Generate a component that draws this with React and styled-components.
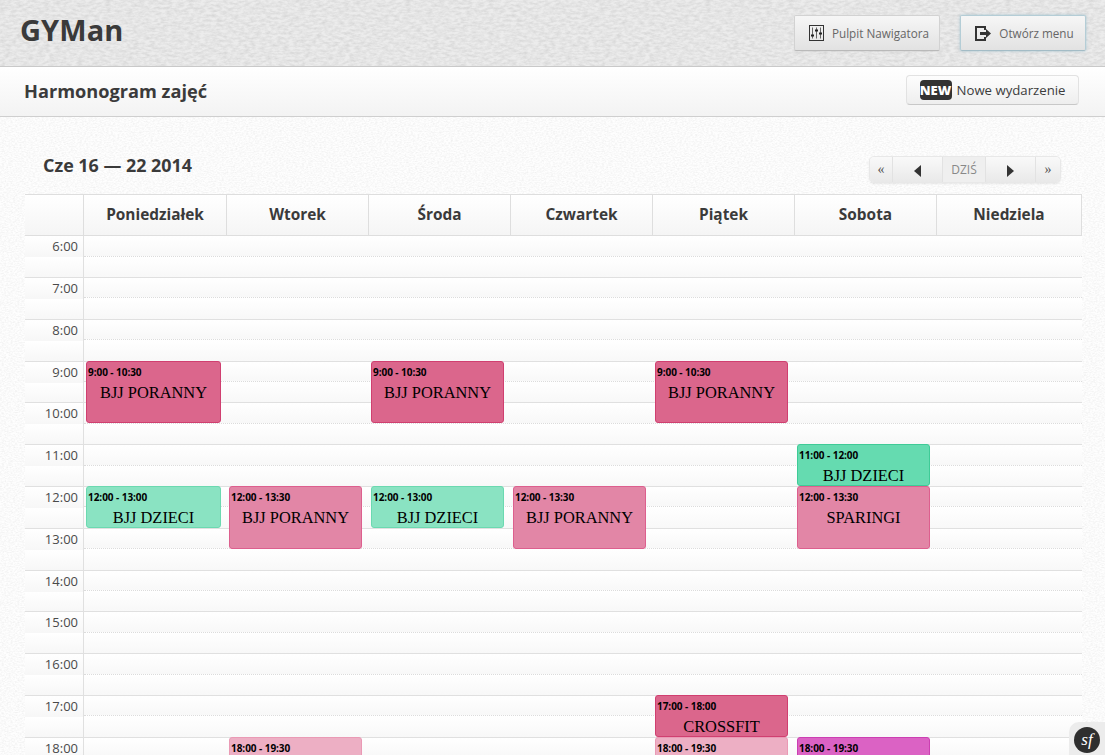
import React from "react";
import styled, { createGlobalStyle } from "styled-components";

const noise = (freq, slope, intercept, base) =>
  `url("data:image/svg+xml,%3Csvg xmlns='http://www.w3.org/2000/svg' width='300' height='300'%3E%3Cfilter id='n' x='0' y='0' width='100%25' height='100%25'%3E%3CfeTurbulence type='fractalNoise' baseFrequency='${freq}' numOctaves='3' stitchTiles='stitch'/%3E%3CfeColorMatrix values='0 0 0 0 0 0 0 0 0 0 0 0 0 0 0 ${slope} 0 0 0 ${intercept}'/%3E%3C/filter%3E%3Crect width='300' height='300' fill='${base}'/%3E%3Crect width='300' height='300' filter='url(%23n)'/%3E%3C/svg%3E")`;

const Global = createGlobalStyle`
  html, body { margin: 0; padding: 0; height: 755px; overflow: hidden; }
  body { font-family: "Open Sans", "Noto Sans", sans-serif; color: #333; }
  * { box-sizing: border-box; }
`;

const Page = styled.div`
  width: 1105px;
  height: 755px;
  overflow: hidden;
  position: relative;
  background: #fcfcfc ${noise("0.45 0.8", 0.1, -0.035, "%23fefefe")};
`;

const TopBar = styled.header`
  height: 67px;
  display: flex;
  align-items: flex-start;
  justify-content: space-between;
  padding: 14px 19px 0 20px;
  border-bottom: 1px solid #c9c9c9;
  background: #e6e6e6 ${noise("0.18 0.4", 0.16, -0.05, "%23ececec")};
`;

const Brand = styled.div`
  font-size: 29px;
  font-weight: 700;
  line-height: 32px;
  color: #3a3a3a;
  letter-spacing: 0.1px;
`;

const TopActions = styled.div`
  display: flex;
  gap: 20px;
  padding-top: 1px;
`;

const TopButton = styled.button`
  height: 36px;
  width: ${(p) => p.$width}px;
  display: flex;
  align-items: center;
  justify-content: center;
  gap: 8px;
  padding: 0 0 0 ${(p) => (p.$active ? 3 : 4)}px;
  font: 400 11.7px "Open Sans", sans-serif;
  color: #666;
  background: linear-gradient(#f6f6f6, #e2e2e2);
  border: 1px solid ${(p) => (p.$active ? "#b4cdd6" : "#d2d2d2")};
  border-bottom-color: ${(p) => (p.$active ? "#a3bcc6" : "#b9b9b9")};
  border-radius: 2px;
  box-shadow: ${(p) => (p.$active ? "0 0 3px rgba(120,170,190,.6)" : "0 1px 1px rgba(0,0,0,.05)")};
`;

const SubBar = styled.div`
  height: 50px;
  display: flex;
  align-items: flex-start;
  justify-content: space-between;
  padding: 8px 26px 0 24px;
  border-bottom: 1px solid #cfcfcf;
  background: linear-gradient(#ffffff, #f3f3f3);
`;

const PageTitle = styled.h1`
  margin: 0;
  font-size: 18.2px;
  line-height: 33px;
  font-weight: 700;
  color: #3b3b3b;
`;

const NewButton = styled.button`
  height: 30px;
  width: 173px;
  display: flex;
  align-items: center;
  justify-content: center;
  gap: 5px;
  padding: 0 0 0 0;
  font: 400 13.2px "Open Sans", sans-serif;
  color: #3c3c3c;
  background: linear-gradient(#fdfdfd, #eeeeee);
  border: 1px solid #e2e2e2;
  border-bottom-color: #c8c8c8;
  border-radius: 4px;
`;

const NewBadge = styled.span`
  width: 32px;
  height: 20px;
  border-radius: 4px;
  background: #333;
  color: #fff;
  font-size: 13px;
  line-height: 21px;
  font-weight: 800;
  text-align: center;
`;

const Calendar = styled.main`
  padding: 30px 23px 0 25px;
`;

const CalToolbar = styled.div`
  height: 47px;
  display: flex;
  align-items: flex-start;
  justify-content: space-between;
  padding: 9px 21px 0 18px;
`;

const CalTitle = styled.h2`
  margin: -4px 0 0;
  font-size: 17.9px;
  line-height: 26px;
  font-weight: 700;
  color: #3a3a3a;
`;

const Nav = styled.div`
  display: flex;
  height: 27px;
  border-radius: 5px;
  overflow: hidden;
  border: 1px solid #e8e8e8;
  box-shadow: 0 1px 2px rgba(0, 0, 0, 0.08);
`;

const NavButton = styled.span`
  width: ${(p) => p.$width}px;
  display: flex;
  align-items: center;
  justify-content: center;
  padding-top: ${(p) => (p.$arrow ? 2 : 0)}px;
  font-size: ${(p) => (p.$today ? 12 : 14)}px;
  color: ${(p) => (p.$today ? "#888" : "#555")};
  background: ${(p) => (p.$today ? "#efefef" : "linear-gradient(#f9f9f9, #e9e9e9)")};
  border-right: 1px solid #e2e2e2;
  font-family: ${(p) => (p.$today ? `"Open Sans", sans-serif` : `"Liberation Serif", serif`)};
  &:last-child { border-right: 0; }
`;

const HeadRow = styled.div`
  display: grid;
  grid-template-columns: 59px 143px repeat(5, 142px) 145px;
  height: 42px;
  border-top: 1px solid #dedede;
  border-bottom: 1px solid #dedede;
  background: linear-gradient(#ffffff, #f5f5f5);
`;

const HeadCell = styled.div`
  display: flex;
  align-items: center;
  justify-content: center;
  border-right: 1px solid #dedede;
  font-size: 15.4px;
  font-weight: 700;
  color: #3a3a3a;
  padding-bottom: 1px;
`;

const GridBody = styled.div`
  position: relative;
  padding-top: 0.3px;
`;

const Hour = styled.div`
  display: grid;
  grid-template-columns: 59px 1fr;
  height: 41.8px;
  border-bottom: 1px solid #e0e0e0;
`;

const TimeLabel = styled.div`
  text-align: right;
  padding: 0 5px 0 0;
  font-size: 13px;
  line-height: 20px;
  color: #4a4a4a;
  border-right: 1px solid #e0e0e0;
  background: linear-gradient(#ffffff 0, #f7f7f7 20.5px, #ffffff 21px, #f7f7f7 41px);
`;

const Slots = styled.div`
  display: grid;
  grid-template-rows: 1fr 1fr;
`;

const Slot = styled.div`
  background: linear-gradient(#ffffff, #f8f8f8);
  border-bottom: ${(p) => (p.$first ? "1px dotted #dcdcdc" : "0")};
`;

const EventLayer = styled.div`
  position: absolute;
  inset: 0;
  display: grid;
  grid-template-columns: 59px 143px repeat(5, 142px) 145px;
  pointer-events: none;
`;

const DayColumn = styled.div`
  position: relative;
`;

const palette = {
  rose: ["#db668c", "#d03f70"],
  pink: ["#e286a6", "#dd5f8e"],
  blush: ["#edafc4", "#ea9ab5"],
  mint: ["#8ae3c2", "#6bd9b0"],
  green: ["#65dbb0", "#3fcb97"],
  magenta: ["#db62c4", "#cc3fb2"],
};

const EventCard = styled.div`
  position: absolute;
  left: 2px;
  border-radius: 3px;
  overflow: hidden;
  color: #000;
  background: ${(p) => palette[p.$tone][0]};
  border: 1px solid ${(p) => palette[p.$tone][1]};
`;

const EventTime = styled.div`
  font-size: 10px;
  font-weight: 700;
  line-height: 14px;
  padding: 3px 0 0 1px;
  letter-spacing: -0.05px;
`;

const EventName = styled.div`
  font-family: "Liberation Serif", serif;
  font-size: 16.4px;
  line-height: 20px;
  margin-top: 4px;
  text-align: center;
`;

const SfCorner = styled.div`
  position: absolute;
  right: 0;
  bottom: 0;
  width: 36px;
  height: 33px;
  padding-top: 3px;
  background: #ececec;
  border-top-left-radius: 10px;
  display: flex;
  align-items: center;
  justify-content: center;
`;

const SfLogo = styled.div`
  width: 26px;
  height: 26px;
  border-radius: 50%;
  background: #2f2f2f;
  color: #fff;
  font: italic 400 17px/25px "Liberation Serif", serif;
  text-align: center;
`;

const SlidersIcon = () => (
  <svg width="15" height="16" viewBox="0 0 15 16" fill="none" stroke="#333">
    <rect x="0.5" y="0.5" width="14" height="15" />
    <path d="M3.5 2.5v11M7.5 2.5v11M11.5 2.5v11" stroke="#666" />
    <path d="M2 10.5h3M6 5.5h3M10 8.5h3" strokeWidth="2" stroke="#222" />
  </svg>
);

const ExitIcon = () => (
  <svg width="16" height="15" viewBox="0 0 16 15" fill="#333">
    <path d="M0 0h11v4H9V2H2v11h7v-2h2v4H0z" />
    <path d="M5 6h6V3l5 4.5-5 4.5V9H5z" />
  </svg>
);

const Triangle = ({ dir }) => (
  <svg width="7" height="12" viewBox="0 0 7 12" fill="#333">
    <path d={dir === "left" ? "M7 0v12L0 6z" : "M0 0v12l7-6z"} />
  </svg>
);

const days = ["Poniedziałek", "Wtorek", "Środa", "Czwartek", "Piątek", "Sobota", "Niedziela"];
const hours = Array.from({ length: 14 }, (_, i) => i + 6);

const lineAt = (hour) => Math.round((hour - 6) * 41.8 + 0.3) - 1;

const events = [
  { day: 0, start: 9, end: 10.5, tone: "rose", time: "9:00 - 10:30", name: "BJJ PORANNY" },
  { day: 2, start: 9, end: 10.5, tone: "rose", time: "9:00 - 10:30", name: "BJJ PORANNY" },
  { day: 4, start: 9, end: 10.5, tone: "rose", time: "9:00 - 10:30", name: "BJJ PORANNY" },
  { day: 5, start: 11, end: 12, tone: "green", time: "11:00 - 12:00", name: "BJJ DZIECI" },
  { day: 0, start: 12, end: 13, tone: "mint", time: "12:00 - 13:00", name: "BJJ DZIECI" },
  { day: 1, start: 12, end: 13.5, tone: "pink", time: "12:00 - 13:30", name: "BJJ PORANNY" },
  { day: 2, start: 12, end: 13, tone: "mint", time: "12:00 - 13:00", name: "BJJ DZIECI" },
  { day: 3, start: 12, end: 13.5, tone: "pink", time: "12:00 - 13:30", name: "BJJ PORANNY" },
  { day: 5, start: 12, end: 13.5, tone: "pink", time: "12:00 - 13:30", name: "SPARINGI" },
  { day: 4, start: 17, end: 18, tone: "rose", time: "17:00 - 18:00", name: "CROSSFIT" },
  { day: 1, start: 18, end: 19.5, tone: "blush", time: "18:00 - 19:30", name: "BJJ PORANNY" },
  { day: 4, start: 18, end: 19.5, tone: "blush", time: "18:00 - 19:30", name: "BJJ PORANNY" },
  { day: 5, start: 18, end: 19.5, tone: "magenta", time: "18:00 - 19:30", name: "SPARINGI" },
];

export default function App() {
  return (
    <Page>
      <Global />
      <TopBar>
        <Brand>GYMan</Brand>
        <TopActions>
          <TopButton $width={146}>
            <SlidersIcon />
            Pulpit Nawigatora
          </TopButton>
          <TopButton $width={126} $active>
            <ExitIcon />
            Otwórz menu
          </TopButton>
        </TopActions>
      </TopBar>
      <SubBar>
        <PageTitle>Harmonogram zajęć</PageTitle>
        <NewButton>
          <NewBadge>NEW</NewBadge>
          Nowe wydarzenie
        </NewButton>
      </SubBar>
      <Calendar>
        <CalToolbar>
          <CalTitle>Cze 16 — 22 2014</CalTitle>
          <Nav>
            <NavButton $width={23}>«</NavButton>
            <NavButton $width={50} $arrow><Triangle dir="left" /></NavButton>
            <NavButton $width={43} $today>DZIŚ</NavButton>
            <NavButton $width={50} $arrow><Triangle dir="right" /></NavButton>
            <NavButton $width={24}>»</NavButton>
          </Nav>
        </CalToolbar>
        <HeadRow>
          <HeadCell />
          {days.map((d) => (
            <HeadCell key={d}>{d}</HeadCell>
          ))}
        </HeadRow>
        <GridBody>
          {hours.map((h) => (
            <Hour key={h}>
              <TimeLabel>{h}:00</TimeLabel>
              <Slots>
                <Slot $first />
                <Slot />
              </Slots>
            </Hour>
          ))}
          <EventLayer>
            <DayColumn />
            {days.map((d, i) => (
              <DayColumn key={d}>
                {events
                  .filter((e) => e.day === i)
                  .map((e) => (
                    <EventCard
                      key={e.time}
                      $tone={e.tone}
                      style={{
                        top: lineAt(e.start),
                        height: lineAt(e.end) - lineAt(e.start),
                        width: i === 0 ? 135 : 133,
                      }}
                    >
                      <EventTime>{e.time}</EventTime>
                      <EventName>{e.name}</EventName>
                    </EventCard>
                  ))}
              </DayColumn>
            ))}
          </EventLayer>
        </GridBody>
      </Calendar>
      <SfCorner>
        <SfLogo>sf</SfLogo>
      </SfCorner>
    </Page>
  );
}
